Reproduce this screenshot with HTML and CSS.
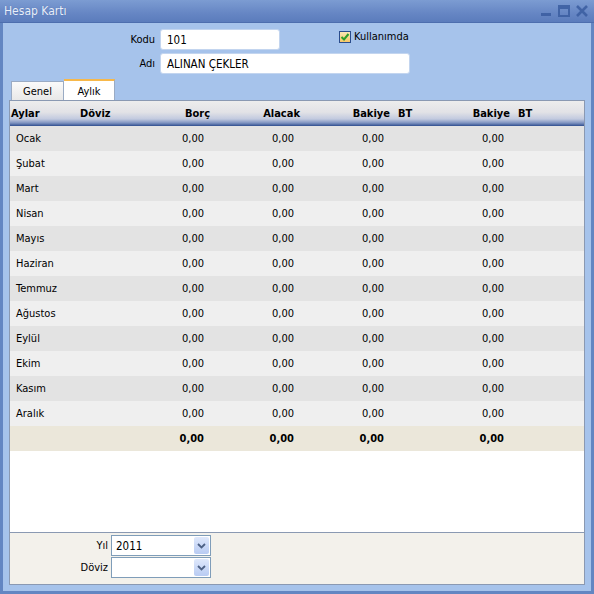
FILE: index.html
```html
<!DOCTYPE html>
<html lang="tr">
<head>
    <meta charset="UTF-8">
    <title>Hesap Kartı</title>
    <link rel="stylesheet" href="styles.css">
</head>
<body>

    <div class="window">
        <div class="titlebar">
            <span class="title">Hesap Kartı</span>
            <div class="win-buttons">
                <svg width="14" height="14" viewBox="0 0 14 14"><rect x="2" y="9" width="10" height="3" fill="#3a5da0"/></svg>
                <svg width="14" height="14" viewBox="0 0 14 14"><rect x="2" y="2" width="10" height="10" fill="none" stroke="#3a5da0" stroke-width="2"/><rect x="2" y="2" width="10" height="3" fill="#3a5da0"/></svg>
                <svg width="14" height="14" viewBox="0 0 14 14"><path d="M2 2 L12 12 M12 2 L2 12" stroke="#3a5da0" stroke-width="2.6"/></svg>
            </div>
        </div>

        <div class="content">
            <div class="top-form">
                <div class="field-row">
                    <label class="field-label">Kodu</label>
                    <div class="text-box short">101</div>
                    <div class="check">
                        <span class="check-box">
                            <svg width="10" height="10" viewBox="0 0 10 10"><path d="M1.5 5 L4 7.5 L8.5 2" fill="none" stroke="#2e9e2a" stroke-width="2"/></svg>
                        </span>
                        <span>Kullanımda</span>
                    </div>
                </div>
                <div class="field-row">
                    <label class="field-label">Adı</label>
                    <div class="text-box long">ALINAN ÇEKLER</div>
                </div>
            </div>

            <div class="tabs">
                <div class="tab">Genel</div>
                <div class="tab active">Aylık</div>
            </div>

            <div class="panel">
                <div class="grid">
                    <div class="row head">
                        <div class="c-ay">Aylar</div>
                        <div class="c-dv">Döviz</div>
                        <div class="c-num">Borç</div>
                        <div class="c-num">Alacak</div>
                        <div class="c-num">Bakiye</div>
                        <div class="c-bt">BT</div>
                        <div class="c-num">Bakiye</div>
                        <div class="c-bt">BT</div>
                    </div>
                    <div class="row"><div class="c-ay">Ocak</div><div class="c-dv"></div><div class="c-num">0,00</div><div class="c-num">0,00</div><div class="c-num">0,00</div><div class="c-bt"></div><div class="c-num">0,00</div><div class="c-bt"></div></div>
                    <div class="row"><div class="c-ay">Şubat</div><div class="c-dv"></div><div class="c-num">0,00</div><div class="c-num">0,00</div><div class="c-num">0,00</div><div class="c-bt"></div><div class="c-num">0,00</div><div class="c-bt"></div></div>
                    <div class="row"><div class="c-ay">Mart</div><div class="c-dv"></div><div class="c-num">0,00</div><div class="c-num">0,00</div><div class="c-num">0,00</div><div class="c-bt"></div><div class="c-num">0,00</div><div class="c-bt"></div></div>
                    <div class="row"><div class="c-ay">Nisan</div><div class="c-dv"></div><div class="c-num">0,00</div><div class="c-num">0,00</div><div class="c-num">0,00</div><div class="c-bt"></div><div class="c-num">0,00</div><div class="c-bt"></div></div>
                    <div class="row"><div class="c-ay">Mayıs</div><div class="c-dv"></div><div class="c-num">0,00</div><div class="c-num">0,00</div><div class="c-num">0,00</div><div class="c-bt"></div><div class="c-num">0,00</div><div class="c-bt"></div></div>
                    <div class="row"><div class="c-ay">Haziran</div><div class="c-dv"></div><div class="c-num">0,00</div><div class="c-num">0,00</div><div class="c-num">0,00</div><div class="c-bt"></div><div class="c-num">0,00</div><div class="c-bt"></div></div>
                    <div class="row"><div class="c-ay">Temmuz</div><div class="c-dv"></div><div class="c-num">0,00</div><div class="c-num">0,00</div><div class="c-num">0,00</div><div class="c-bt"></div><div class="c-num">0,00</div><div class="c-bt"></div></div>
                    <div class="row"><div class="c-ay">Ağustos</div><div class="c-dv"></div><div class="c-num">0,00</div><div class="c-num">0,00</div><div class="c-num">0,00</div><div class="c-bt"></div><div class="c-num">0,00</div><div class="c-bt"></div></div>
                    <div class="row"><div class="c-ay">Eylül</div><div class="c-dv"></div><div class="c-num">0,00</div><div class="c-num">0,00</div><div class="c-num">0,00</div><div class="c-bt"></div><div class="c-num">0,00</div><div class="c-bt"></div></div>
                    <div class="row"><div class="c-ay">Ekim</div><div class="c-dv"></div><div class="c-num">0,00</div><div class="c-num">0,00</div><div class="c-num">0,00</div><div class="c-bt"></div><div class="c-num">0,00</div><div class="c-bt"></div></div>
                    <div class="row"><div class="c-ay">Kasım</div><div class="c-dv"></div><div class="c-num">0,00</div><div class="c-num">0,00</div><div class="c-num">0,00</div><div class="c-bt"></div><div class="c-num">0,00</div><div class="c-bt"></div></div>
                    <div class="row"><div class="c-ay">Aralık</div><div class="c-dv"></div><div class="c-num">0,00</div><div class="c-num">0,00</div><div class="c-num">0,00</div><div class="c-bt"></div><div class="c-num">0,00</div><div class="c-bt"></div></div>
                    <div class="row total"><div class="c-ay"></div><div class="c-dv"></div><div class="c-num">0,00</div><div class="c-num">0,00</div><div class="c-num">0,00</div><div class="c-bt"></div><div class="c-num">0,00</div><div class="c-bt"></div></div>
                </div>

                <div class="footer">
                    <div class="combo-row">
                        <label class="combo-label">Yıl</label>
                        <div class="combo"><span class="combo-text">2011</span><span class="combo-btn"><svg width="9" height="6" viewBox="0 0 9 6"><path d="M1 1 L4.5 4.5 L8 1" fill="none" stroke="#4d6185" stroke-width="1.8"/></svg></span></div>
                    </div>
                    <div class="combo-row">
                        <label class="combo-label">Döviz</label>
                        <div class="combo"><span class="combo-text"></span><span class="combo-btn"><svg width="9" height="6" viewBox="0 0 9 6"><path d="M1 1 L4.5 4.5 L8 1" fill="none" stroke="#4d6185" stroke-width="1.8"/></svg></span></div>
                    </div>
                </div>
            </div>
        </div>
    </div>

</body>
</html>
```

FILE: styles.css
```css
body {
    margin: 0;
    font-family: Tahoma, "DejaVu Sans Condensed", "DejaVu Sans", sans-serif;
    font-size: 11px;
    color: #000;
}
.window {
    width: 594px;
    height: 594px;
    box-sizing: border-box;
    background-color: #a6c3eb;
    border: solid #6386c2;
    border-width: 0 3px 3px 3px;
    display: flex;
    flex-direction: column;
}
.titlebar {
    height: 22px;
    margin: 0 -3px;
    padding: 0 4px;
    background: linear-gradient(#7c9cd2, #6686c4 60%, #5b7cbc);
    border-bottom: 1px solid #4d6eae;
    display: flex;
    align-items: center;
    justify-content: space-between;
}
.title {
    color: #e8eefa;
    font-size: 12px;
    text-shadow: 0 0 1px #4a6aa8;
}
.win-buttons {
    display: flex;
    gap: 4px;
    margin-right: 1px;
    opacity: 0.85;
}
.content {
    flex: 1;
    padding: 6px;
    display: flex;
    flex-direction: column;
}

/* top form */
.top-form {
    display: flex;
    flex-direction: column;
    gap: 3px;
}
.field-row {
    display: flex;
    align-items: center;
    height: 21px;
}
.field-label {
    width: 146px;
    text-align: right;
    padding-right: 5px;
}
.text-box {
    height: 21px;
    box-sizing: border-box;
    background: #fff;
    border: 1px solid #c3d5ef;
    border-radius: 3px;
    padding: 3px 6px 0 6px;
    font-size: 11.5px;
}
.text-box.short {
    width: 120px;
}
.text-box.long {
    width: 250px;
}
.check {
    display: flex;
    align-items: center;
    gap: 3px;
    margin-left: 59px;
    margin-top: -6px;
}
.check-box {
    width: 10px;
    height: 10px;
    border: 1px solid #2a4c8c;
    background: linear-gradient(#fbe7b5, #f6c768);
    display: flex;
}

/* tabs */
.tabs {
    display: flex;
    margin-top: 5px;
    padding-left: 2px;
    align-items: flex-end;
    height: 21px;
}
.tab {
    height: 19px;
    box-sizing: border-box;
    padding-top: 3px;
    width: 53px;
    text-align: center;
    background: linear-gradient(#fafafa, #e8e8e8);
    border: 1px solid #9aabc4;
    border-bottom: none;
}
.tab.active {
    height: 21px;
    width: 51px;
    padding-top: 4px;
    background: #fff;
    border-top: 2px solid #f7b84a;
    border-left: none;
}

/* grid */
.panel {
    flex: 1;
    background: #fff;
    border: 1px solid #8a99b2;
    display: flex;
    flex-direction: column;
}
.grid {
    flex: 1;
}
.row {
    display: flex;
    height: 25px;
    align-items: center;
    background: #e3e3e3;
}
.row > div {
    box-sizing: border-box;
    flex: none;
}
.row:nth-child(odd) {
    background: #efefef;
}
.row.head {
    background: linear-gradient(#ededed, #e2e2e6 45%, #c2cadf 72%, #7d92c0 88%, #2f4e8f);
    font-weight: bold;
    align-items: flex-start;
    padding-top: 6px;
    box-sizing: border-box;
}
.row.total {
    background: #ebe7da;
    font-weight: bold;
}
.c-ay {
    width: 70px;
    padding-left: 6px;
}
.row.head .c-ay {
    padding-left: 1px;
}
.c-dv {
    width: 42px;
}
.c-num {
    width: 90px;
    text-align: right;
    padding-right: 8px;
}
.row.head .c-num {
    padding-right: 2px;
}
.c-bt {
    width: 30px;
    padding-left: 6px;
}

/* footer */
.footer {
    height: 52px;
    border-top: 1px solid #8a99b2;
    background: #f3f1eb;
    padding-top: 2px;
    box-sizing: border-box;
    display: flex;
    flex-direction: column;
    gap: 1px;
}
.combo-row {
    display: flex;
    align-items: center;
    height: 21px;
}
.combo-label {
    width: 98px;
    text-align: right;
    padding-right: 3px;
}
.combo {
    width: 100px;
    height: 21px;
    box-sizing: border-box;
    border: 1px solid #7f9db9;
    background: #fff;
    display: flex;
    align-items: center;
    justify-content: space-between;
}
.combo-text {
    padding-left: 4px;
    font-size: 11.5px;
}
.combo-btn {
    width: 15px;
    height: 17px;
    margin-right: 1px;
    background: linear-gradient(#dfe8fb, #b8cbf3);
    border-radius: 2px;
    display: flex;
    align-items: center;
    justify-content: center;
}
```
